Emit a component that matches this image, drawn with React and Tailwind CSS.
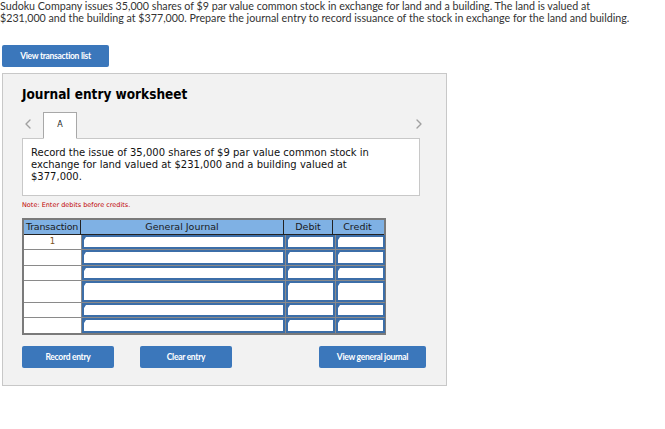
import React from 'react';
import { ChevronLeft, ChevronRight } from 'lucide-react';

const rows = [
  { h: 'h-[14px]', n: '1' },
  { h: 'h-[15px]', n: '' },
  { h: 'h-[14px]', n: '' },
  { h: 'h-[21px]', n: '' },
  { h: 'h-[14px]', n: '' },
  { h: 'h-[15px]', n: '' },
];

function InputCell() {
  return (
    <div className="relative border-2 border-[#3c6ea8] bg-white">
      <span className="absolute left-0 top-0 w-0 h-0 border-t-[3px] border-r-[2px] border-t-[#3c6ea8] border-r-transparent" />
    </div>
  );
}

function BlueButton({ children, className }) {
  return (
    <button
      type="button"
      className={`h-[22px] rounded-[2px] bg-[#3b77bb] text-white text-[8.5px] font-bold tracking-[-0.3px] font-['Lato',sans-serif] ${className}`}
    >
      {children}
    </button>
  );
}

export default function App() {
  return (
    <div className="w-[665px] h-[429px] bg-white text-[#222]">
      <p className="text-[10.7px] leading-[12px] text-[#333] font-['Lato',sans-serif] whitespace-nowrap">
        Sudoku Company issues 35,000 shares of $9 par value common stock in exchange for land and a building. The land is valued at
        <br />
        $231,000 and the building at $377,000. Prepare the journal entry to record issuance of the stock in exchange for the land and building.
      </p>

      <BlueButton className="mt-[21px] ml-[2px] w-[107px]">View transaction list</BlueButton>

      <section className="mt-[6px] ml-[2px] w-[445px] h-[313px] border border-[#c8c8c8] bg-[#f2f2f2] pl-[19px] pt-[12px]">
        <h2 className="font-['DejaVu_Sans_Condensed','DejaVu_Sans',sans-serif] font-bold text-[13.5px] leading-[16px] text-black">
          Journal entry worksheet
        </h2>

        <div className="mt-[10px] flex items-end h-[26px] w-[398px] relative">
          <ChevronLeft className="w-4 h-4 text-[#a0a0a0] mb-[6px] -ml-[2px]" strokeWidth={2} />
          <div className="ml-[7px] w-[34px] h-[27px] -mb-[1px] bg-white border border-[#a8a8a8] border-b-white z-10 flex justify-center pt-[8px] text-[8px] font-['DejaVu_Sans',sans-serif] leading-none">
            A
          </div>
          <ChevronRight className="absolute right-[-7px] top-[4px] w-4 h-4 text-[#a0a0a0]" strokeWidth={2} />
        </div>

        <div className="w-[398px] h-[58px] bg-white border border-[#c8c8c8] pl-[8px] pt-[8px] text-[10px] leading-[12px] font-['DejaVu_Sans',sans-serif] text-[#111]">
          Record the issue of 35,000 shares of $9 par value common stock in
          <br />
          exchange for land valued at $231,000 and a building valued at
          <br />
          $377,000.
        </div>

        <p className="mt-[5px] text-[6.5px] leading-[8px] text-[#c00000] font-['DejaVu_Sans',sans-serif]">Note: Enter debits before credits.</p>

        <div className="mt-[9px] w-[364px] border-2 border-[#7a7a7a] font-['DejaVu_Sans',sans-serif] text-[9.5px]">
          <div className="grid grid-cols-[57px_203px_49px_49px] h-[15px] bg-[#7fb1e4] text-[#1a1a1a] border-b border-[#222] leading-none">
            <div className="flex items-center justify-center border-r border-[#222] tracking-[-0.2px]">Transaction</div>
            <div className="flex items-center justify-center border-r border-[#222]">General Journal</div>
            <div className="flex items-center justify-center border-r border-[#222]">Debit</div>
            <div className="flex items-center justify-center">Credit</div>
          </div>
          <div className="flex flex-col gap-px bg-[#8a8a8a]">
            {rows.map((r, i) => (
              <div key={i} className={`grid grid-cols-[57px_203px_49px_49px] gap-px ${r.h}`}>
                <div className="bg-white text-center pt-[2px] leading-none text-[8.5px] text-[#7a5020]">{r.n}</div>
                <InputCell />
                <InputCell />
                <InputCell />
              </div>
            ))}
          </div>
        </div>

        <div className="mt-[11px] flex">
          <BlueButton className="w-[92px]">Record entry</BlueButton>
          <BlueButton className="ml-[26px] w-[92px]">Clear entry</BlueButton>
          <BlueButton className="ml-[87px] w-[107px]">View general journal</BlueButton>
        </div>
      </section>
    </div>
  );
}
